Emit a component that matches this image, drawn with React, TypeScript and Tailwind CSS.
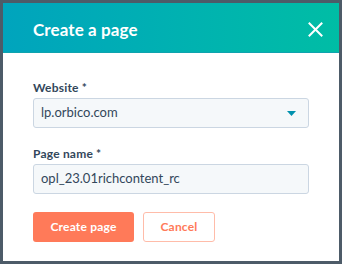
import React from "react";

export default function App() {
  const font = { fontFamily: 'Lato, "Open Sans", "Liberation Sans", sans-serif' };
  return (
    <div className="w-[342px] h-[264px] bg-[#4d5b68] p-[3px]" style={font}>
      <div className="w-full h-full bg-white flex flex-col">
        <div className="h-[50px] shrink-0 flex items-center justify-between pl-[30px] pr-[16px] pt-[3px] bg-gradient-to-r from-[#00a4bd] to-[#00bda5] border-b border-[#0fa3ae]">
          <h1 className="text-white text-[17px] font-bold leading-none tracking-[0.1px]">Create a page</h1>
          <svg width="15" height="15" viewBox="0 0 15 15" className="mt-[1px]">
            <path d="M1.5 1.5 L13.5 13.5 M13.5 1.5 L1.5 13.5" stroke="white" strokeWidth="2" strokeLinecap="square" />
          </svg>
        </div>
        <div className="flex flex-col px-[30px] pt-[27px]">
          <label className="text-[12px] leading-[16px] font-bold text-[#33475b] mb-[2px] tracking-[0.2px]">Website *</label>
          <div className="h-[30px] flex items-center justify-between bg-[#f5f8fa] border border-[#cbd6e2] rounded-[3px] pl-[7px] pr-[12px]">
            <span className="text-[13px] text-[#33475b]">lp.orbico.com</span>
            <svg width="9" height="5" viewBox="0 0 9 5" className="mt-[1px]">
              <path d="M0 0 L9 0 L4.5 5 Z" fill="#0091ae" />
            </svg>
          </div>
          <label className="mt-[18px] text-[12px] leading-[16px] font-bold text-[#33475b] mb-[2px] tracking-[0.2px]">Page name *</label>
          <div className="h-[30px] flex items-center bg-[#f5f8fa] border border-[#cbd6e2] rounded-[3px] pl-[7px]">
            <span className="text-[13px] text-[#33475b]">opl_23.01richcontent_rc</span>
          </div>
          <div className="mt-[18px] flex gap-[9px]">
            <button className="h-[30px] w-[101px] rounded-[3px] bg-[#ff7a59] text-white text-[12px] font-bold tracking-[0.2px]">Create page</button>
            <button className="h-[30px] w-[72px] rounded-[3px] bg-white border border-[#ffbca9] text-[#ff7a59] text-[12px] font-bold tracking-[0.2px]">Cancel</button>
          </div>
        </div>
      </div>
    </div>
  );
}
